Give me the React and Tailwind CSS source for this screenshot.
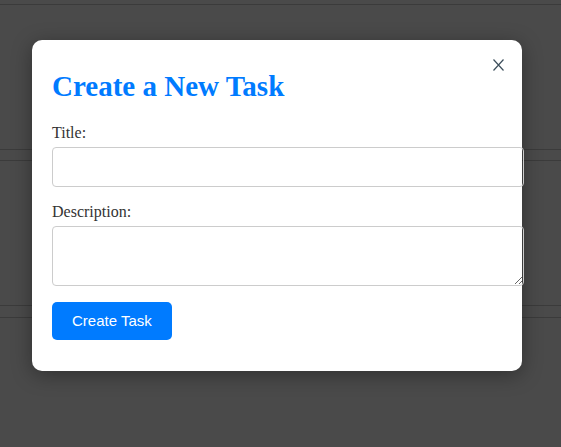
import React from 'react';

const serif = { fontFamily: '"Liberation Serif", "Times New Roman", serif' };

const Background = () => (
  <div className="flex flex-col">
    <div className="h-[5px] border-b border-[#3b3b3b]" />
    <div className="h-[145px] border-b border-[#3b3b3b]" />
    <div className="h-[10px]" />
    <div className="h-[146px] border-y border-[#3b3b3b]" />
    <div className="h-[11px]" />
    <div className="h-[130px] border-t border-[#3b3b3b]" />
  </div>
);

export default function App() {
  return (
    <div className="relative h-[447px] w-full overflow-hidden bg-[#4a4a4a]">
      <Background />

      <div
        className="absolute left-[32px] top-[40px] w-[490px] rounded-[10px] bg-white px-5 pt-5 pb-[31px] shadow-[0_4px_20px_rgba(0,0,0,0.35)]"
        style={serif}
      >
        <button className="absolute right-[17px] top-[18px] flex h-[14px] w-[14px] items-center justify-center text-[#3d4f5c]">
          <svg width="11" height="12" viewBox="0 0 11 12" fill="none" stroke="currentColor" strokeWidth="1.2">
            <path d="M0.5 0.5 L10.5 11.5 M10.5 0.5 L0.5 11.5" />
          </svg>
        </button>

        <h2 className="mt-[10px] mb-[22px] text-[29px] font-bold leading-[32px] text-[#007bff]">
          Create a New Task
        </h2>

        <form onSubmit={(e) => e.preventDefault()}>
          <label className="mb-[5px] block text-[16px] leading-[18px] text-[#333]">Title:</label>
          <input
            type="text"
            className="mb-[16px] box-content block h-[18px] w-full rounded-[4px] border border-[#ccc] p-[10px] outline-none"
          />

          <label className="mb-[5px] block text-[16px] leading-[18px] text-[#333]">Description:</label>
          <textarea className="mb-[16px] box-content block h-[38px] w-full rounded-[4px] border border-[#ccc] p-[10px] outline-none" />

          <button
            type="submit"
            className="rounded-[5px] bg-[#007bff] px-5 py-[10px] text-[15px] leading-[18px] text-white"
            style={{ fontFamily: '"Liberation Sans", Arial, sans-serif' }}
          >
            Create Task
          </button>
        </form>
      </div>
    </div>
  );
}
